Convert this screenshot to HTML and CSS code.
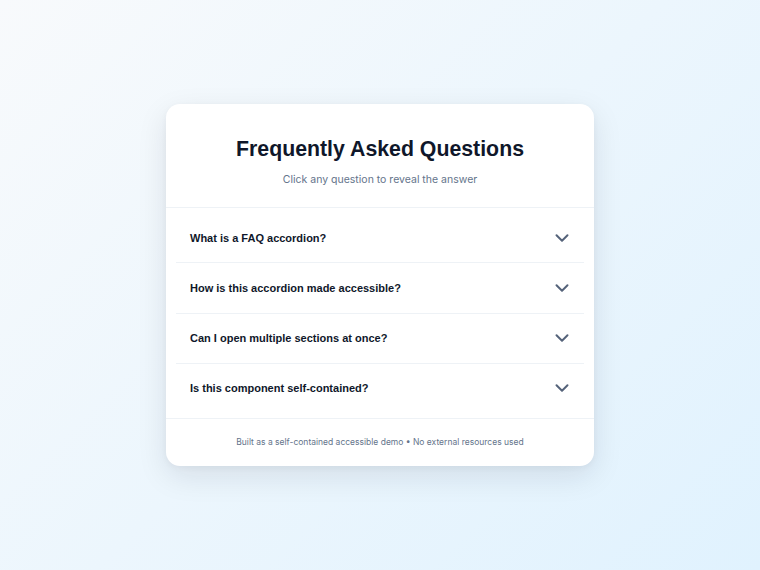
FILE: index.html
```html
<!DOCTYPE html>
<html lang="en">
<head>
  <meta charset="UTF-8" />
  <meta name="viewport" content="width=device-width, initial-scale=1.0" />
  <title>FAQ Accordion</title>
  <link rel="stylesheet" href="styles.css">
</head>
<body>
  <main class="faq-card">
    <header class="faq-header">
      <h1>Frequently Asked Questions</h1>
      <p>Click any question to reveal the answer</p>
    </header>

    <div class="faq-list">
      <div class="faq-item">
        <button class="faq-question" aria-expanded="false">
          <span>What is a FAQ accordion?</span>
          <svg class="chevron" viewBox="0 0 24 24" aria-hidden="true"><path d="M6 9l6 6 6-6"/></svg>
        </button>
      </div>
      <div class="faq-item">
        <button class="faq-question" aria-expanded="false">
          <span>How is this accordion made accessible?</span>
          <svg class="chevron" viewBox="0 0 24 24" aria-hidden="true"><path d="M6 9l6 6 6-6"/></svg>
        </button>
      </div>
      <div class="faq-item">
        <button class="faq-question" aria-expanded="false">
          <span>Can I open multiple sections at once?</span>
          <svg class="chevron" viewBox="0 0 24 24" aria-hidden="true"><path d="M6 9l6 6 6-6"/></svg>
        </button>
      </div>
      <div class="faq-item">
        <button class="faq-question" aria-expanded="false">
          <span>Is this component self-contained?</span>
          <svg class="chevron" viewBox="0 0 24 24" aria-hidden="true"><path d="M6 9l6 6 6-6"/></svg>
        </button>
      </div>
    </div>

    <footer class="faq-footer">Built as a self-contained accessible demo • No external resources used</footer>
  </main>
</body>
</html>
```

FILE: styles.css
```css
* { box-sizing: border-box; }
html, body { height: 100%; }
body { margin: 0; display: flex; align-items: center; justify-content: center; font-family: Inter, "Noto Sans", sans-serif; background: linear-gradient(135deg, #f8fafc 0%, #e0f2fe 100%); color: #0f172a; }

.faq-card { width: 428px; background: #fff; border-radius: 14px; box-shadow: 0 10px 30px rgba(15, 23, 42, 0.10), 0 2px 6px rgba(15, 23, 42, 0.04); overflow: hidden; }

.faq-header { text-align: center; padding: 32px 20px 20px; border-bottom: 1px solid #eef2f6; }
.faq-header h1 { margin: 0; font-family: "Liberation Sans", Arial, sans-serif; font-size: 21.3px; line-height: 26px; font-weight: 700; color: #0f172a; }
.faq-header p { margin: 11px 0 0; font-size: 10.5px; line-height: 14px; color: #64748b; }

.faq-list { padding: 5px 10px; }
.faq-item { border-bottom: 1px solid #eef2f6; }
.faq-item:last-child { border-bottom: none; }
.faq-question { width: 100%; height: 49.25px; display: flex; align-items: center; justify-content: space-between; padding: 0 11px 0 14px; background: none; border: none; cursor: pointer; text-align: left; font-family: "Liberation Sans", Arial, sans-serif; font-size: 11px; font-weight: 700; color: #0f172a; }
.chevron { width: 22px; height: 22px; fill: none; stroke: #55637a; stroke-width: 2.2; stroke-linecap: round; stroke-linejoin: round; }

.faq-footer { border-top: 1px solid #eef2f6; padding: 17px 16px 18px; text-align: center; font-size: 8.5px; line-height: 12px; color: #64748b; }
```
